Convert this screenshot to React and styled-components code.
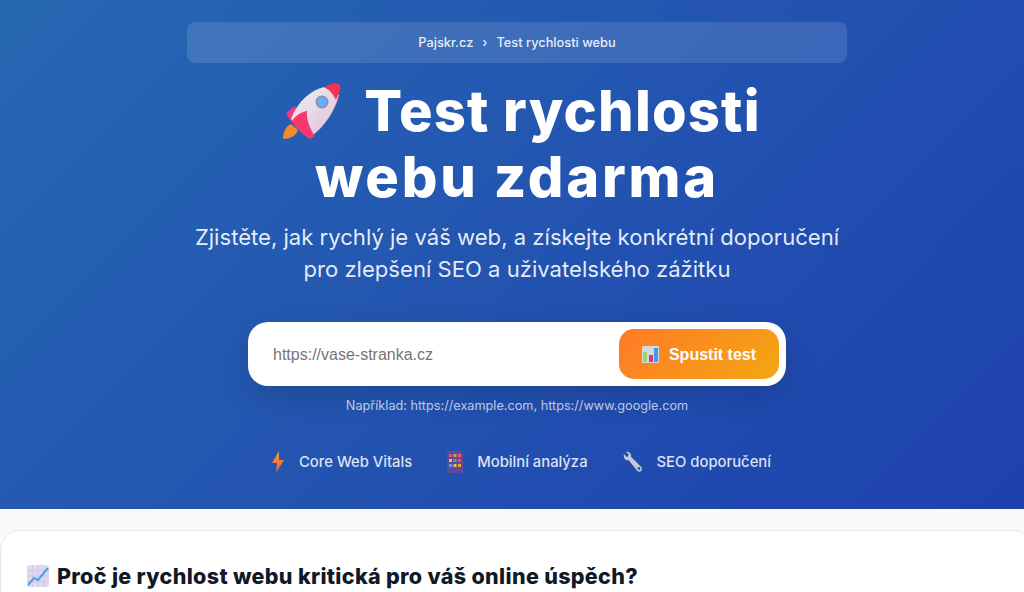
import React from 'react';
import styled, { createGlobalStyle } from 'styled-components';

const GlobalStyle = createGlobalStyle`
  html, body {
    margin: 0;
    padding: 0;
    overflow: hidden;
    height: 592px;
    background: #f8fafc;
    font-family: Inter, "Noto Sans", sans-serif;
  }
`;

// the original page is a bit wider than the window, so everything sits 5px off centre
const Page = styled.div`
  width: 1034px;
  height: 592px;
  overflow: hidden;
`;

const Hero = styled.section`
  box-sizing: border-box;
  height: 509px;
  padding-top: 22px;
  display: flex;
  flex-direction: column;
  align-items: center;
  color: #fff;
  background: linear-gradient(135deg, #2768b2 0%, #1e40af 100%);
`;

const Breadcrumb = styled.nav`
  box-sizing: border-box;
  width: 660px;
  height: 41px;
  display: flex;
  align-items: center;
  justify-content: center;
  gap: 9px;
  font-size: 12.8px;
  font-weight: 500;
  color: rgba(255, 255, 255, 0.9);
  background: rgba(255, 255, 255, 0.12);
  border-radius: 8px;
`;

const Title = styled.h1`
  margin: 15px 0 0;
  font-size: 56px;
  line-height: 66px;
  font-weight: 800;
  text-align: center;
`;

const TitleLine = styled.span`
  display: flex;
  align-items: center;
  justify-content: center;
  gap: 22px;
  padding-left: ${(p) => p.$indent || 0}px;
  letter-spacing: ${(p) => p.$tracking}px;
`;

const Subtitle = styled.p`
  margin: 11px 0 0;
  font-size: 22.1px;
  line-height: 32px;
  font-weight: 400;
  text-align: center;
  color: rgba(255, 255, 255, 0.9);
`;

const SearchForm = styled.form`
  box-sizing: border-box;
  width: 538px;
  height: 64px;
  margin-top: 37px;
  padding: 7px;
  display: flex;
  align-items: center;
  background: #fff;
  border-radius: 20px;
  box-shadow: 0 10px 30px rgba(0, 0, 0, 0.15);
`;

const UrlInput = styled.input`
  flex: 1;
  min-width: 0;
  padding: 1px 18px 0;
  border: 0;
  outline: none;
  background: transparent;
  font-family: "Liberation Sans", Arial, sans-serif;
  font-size: 16px;
  color: #111;

  &::placeholder {
    color: #757575;
    opacity: 1;
  }
`;

const RunButton = styled.button`
  width: 160px;
  height: 50px;
  padding: 1px 0 0;
  display: flex;
  align-items: center;
  justify-content: center;
  gap: 10px;
  border: 0;
  border-radius: 15px;
  color: #fff;
  font-family: "Liberation Sans", Arial, sans-serif;
  font-size: 16px;
  font-weight: 700;
  background: linear-gradient(135deg, #ff7a28 0%, #f3a712 100%);
`;

const Hint = styled.p`
  margin: 12px 0 0;
  font-size: 12.7px;
  line-height: 16px;
  color: rgba(255, 255, 255, 0.7);
`;

const FeatureList = styled.ul`
  list-style: none;
  margin: 36px 0 0 8px;
  padding: 0;
  display: flex;
  gap: 35px;
`;

const Feature = styled.li`
  display: flex;
  align-items: center;
  gap: 14px;
  height: 24px;
  font-size: 14.8px;
  font-weight: 500;
  color: rgba(255, 255, 255, 0.85);
`;

const Content = styled.main`
  padding-top: 21px;
  background: #f8fafc;
`;

const Card = styled.article`
  box-sizing: border-box;
  height: 120px;
  padding: 29px 26px;
  background: #fff;
  border: 1px solid #e5e7eb;
  border-radius: 20px 20px 0 0;
`;

const CardTitle = styled.h2`
  margin: 0;
  display: flex;
  align-items: center;
  gap: 8px;
  font-size: 21.5px;
  line-height: 32px;
  font-weight: 800;
  letter-spacing: 0.33px;
  color: #111827;
`;

const RocketIcon = () => (
  <svg width="60" height="57" viewBox="0 0 60 57">
    <defs>
      <linearGradient id="rk-body" x1="0" y1="0" x2="1" y2="1">
        <stop offset="0" stopColor="#f4f0f2" />
        <stop offset="1" stopColor="#d9bfd8" />
      </linearGradient>
    </defs>
    <path d="M9 41C4 43 1 49 1 56C8 56 14 53 16 47Z" fill="#f58a2a" />
    <path d="M4 30L13 23L19 36L27 45L31 52L28 56C21 52 10 42 4 30Z" fill="#f03a7a" />
    <path d="M42 4C30 7 16 17 9 36L28 54C44 43 53 27 57 12Z" fill="url(#rk-body)" />
    <path d="M10 38C13 33 19 29 25 28C24 34 27 45 33 53L28 56C22 51 15 46 10 38Z" fill="#f5396e" />
    <path d="M42 4C50 0 56 -1 58 2C59 6 57 10 54 17C51 11 48 7 42 4Z" fill="#f8324f" />
    <circle cx="40" cy="19" r="6.5" fill="#8f8da3" />
    <circle cx="40" cy="19" r="4.8" fill="#62b0fb" />
  </svg>
);

const ChartIcon = () => (
  <svg width="17" height="17" viewBox="0 0 17 17">
    <rect width="17" height="17" rx="1" fill="#d9d6dc" />
    <rect x="1" y="6" width="4" height="10" fill="#9bd468" />
    <rect x="7" y="9" width="4" height="7" fill="#e9307c" />
    <rect x="12" y="2" width="4" height="14" fill="#3d9be9" />
  </svg>
);

const BoltIcon = () => (
  <svg width="14" height="24" viewBox="0 0 14 24">
    <defs>
      <linearGradient id="bolt" x1="0" y1="0" x2="0" y2="1">
        <stop offset="0" stopColor="#f59c2e" />
        <stop offset="1" stopColor="#ee5a3a" />
      </linearGradient>
    </defs>
    <path d="M8 1L1 13H6L5 23L13 10H8Z" fill="url(#bolt)" />
  </svg>
);

const AbacusIcon = () => (
  <svg width="16" height="22" viewBox="0 0 16 22">
    <rect width="16" height="22" rx="1" fill="#5c4a9c" />
    <rect x="2" y="3" width="3" height="3" fill="#f0503c" />
    <rect x="6.5" y="3" width="3" height="3" fill="#e9a02c" />
    <rect x="11" y="3" width="3" height="3" fill="#ee5a8a" />
    <rect x="2" y="8" width="3" height="3" fill="#f3c33a" />
    <rect x="6.5" y="8" width="3" height="3" fill="#44a3ee" />
    <rect x="11" y="8" width="3" height="3" fill="#f0503c" />
    <rect x="2" y="13" width="3" height="3" fill="#44a3ee" />
    <rect x="6.5" y="13" width="3" height="3" fill="#f3c33a" />
    <rect x="11" y="13" width="3" height="3" fill="#e9a02c" />
  </svg>
);

const WrenchIcon = () => (
  <svg width="20" height="22" viewBox="0 0 22 22" preserveAspectRatio="none">
    <path d="M1 3L4 6L6 5L6 3L3 1C6 0 9 2 9 5L9 6L19 15C21 16 21 19 20 20C18 21 16 21 15 19L6 9C3 10 0 7 1 3Z" fill="#c6c8da" />
    <circle cx="17.5" cy="17.5" r="1.4" fill="#2a56ae" />
  </svg>
);

const TrendIcon = () => (
  <svg width="22" height="22" viewBox="0 0 22 22">
    <rect width="22" height="22" rx="3" fill="#e2d8ee" />
    <path d="M5.5 0V22M11 0V22M16.5 0V22M0 5.5H22M0 11H22M0 16.5H22" stroke="#cfc2e0" strokeWidth="0.8" />
    <path d="M1 20L7 13L11 15L21 3" fill="none" stroke="#45a3e8" strokeWidth="2" />
  </svg>
);

const App = () => (
  <Page>
    <GlobalStyle />
    <Hero>
      <Breadcrumb>
        <span>Pajskr.cz</span>
        <span>›</span>
        <span>Test rychlosti webu</span>
      </Breadcrumb>
      <Title>
        <TitleLine $tracking={1.2} $indent={9}>
          <RocketIcon />
          Test rychlosti
        </TitleLine>
        <TitleLine $tracking={2.8}>webu zdarma</TitleLine>
      </Title>
      <Subtitle>
        Zjistěte, jak rychlý je váš web, a získejte konkrétní doporučení
        <br />
        pro zlepšení SEO a uživatelského zážitku
      </Subtitle>
      <SearchForm>
        <UrlInput placeholder="https://vase-stranka.cz" />
        <RunButton type="button">
          <ChartIcon />
          Spustit test
        </RunButton>
      </SearchForm>
      <Hint>Například: https://example.com, https://www.google.com</Hint>
      <FeatureList>
        <Feature>
          <BoltIcon />
          Core Web Vitals
        </Feature>
        <Feature>
          <AbacusIcon />
          Mobilní analýza
        </Feature>
        <Feature>
          <WrenchIcon />
          SEO doporučení
        </Feature>
      </FeatureList>
    </Hero>
    <Content>
      <Card>
        <CardTitle>
          <TrendIcon />
          Proč je rychlost webu kritická pro váš online úspěch?
        </CardTitle>
      </Card>
    </Content>
  </Page>
);

export default App;
